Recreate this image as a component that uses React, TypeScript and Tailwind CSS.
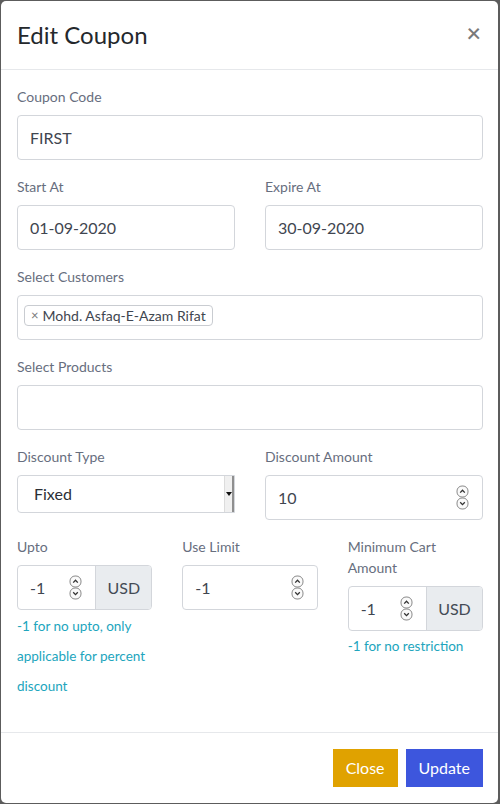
import type { ReactNode } from "react";

const FONT = { fontFamily: "Lato, 'Noto Sans', sans-serif" };

function Spinner() {
  return (
    <svg width="13" height="25" viewBox="0 0 13 25" className="shrink-0">
      <rect x="1" y="1" width="11" height="11" rx="5" fill="#fafafa" stroke="#8a8a8a" strokeWidth="1" />
      <rect x="1" y="13" width="11" height="11" rx="5" fill="#fafafa" stroke="#8a8a8a" strokeWidth="1" />
      <path d="M4.2 7.6 L6.5 5.2 L8.8 7.6" fill="none" stroke="#333" strokeWidth="1.3" />
      <path d="M4.2 17.2 L6.5 19.6 L8.8 17.2" fill="none" stroke="#333" strokeWidth="1.3" />
    </svg>
  );
}

function Label({ children }: { children: ReactNode }) {
  return <label className="block text-[14px] leading-[21px] text-[#676e7e] mb-2">{children}</label>;
}

function TextBox({ value }: { value?: string }) {
  return (
    <div className="h-[45px] border border-[#d3d6db] rounded-[4px] px-3 flex items-center text-[16px] text-[#3f4650]">
      {value}
    </div>
  );
}

function NumberBox({ value }: { value: string }) {
  return (
    <div className="h-[45px] border border-[#d3d6db] rounded-[4px] pl-3 pr-[13px] flex items-center justify-between text-[16px] text-[#3f4650]">
      <span>{value}</span>
      <Spinner />
    </div>
  );
}

function UsdGroup({ value }: { value: string }) {
  return (
    <div className="h-[45px] border border-[#d3d6db] rounded-[4px] flex text-[16px] text-[#3f4650] overflow-hidden">
      <div className="flex-1 flex items-center justify-between pl-3 pr-[13px]">
        <span>{value}</span>
        <Spinner />
      </div>
      <div className="w-[56px] bg-[#e9ecef] border-l border-[#d3d6db] flex items-center justify-center text-[16px] text-[#444b55]">
        USD
      </div>
    </div>
  );
}

function Help({ children }: { children: ReactNode }) {
  return <div className="text-[13.5px] leading-[30px] text-[#21a5bd]">{children}</div>;
}

export default function App() {
  return (
    <div className="bg-[#5c5c5c] min-h-[804px] pt-px pl-px pr-[2px] pb-px" style={FONT}>
      <div className="bg-white rounded-[5px] h-[802px] flex flex-col">
        <div className="flex items-start justify-between px-4 pt-4 pb-4 border-b border-[#e6e8eb]">
          <h1 className="text-[24px] leading-[36px] text-[#24282c]">Edit Coupon</h1>
          <button className="text-[#7a7a7a] text-[25px] leading-[26px] font-semibold mt-[2px] mr-[1px]">×</button>
        </div>

        <div className="pt-4 pb-4 pl-4 pr-[15px] flex-1">
          <div className="mb-4">
            <Label>Coupon Code</Label>
            <TextBox value="FIRST" />
          </div>

          <div className="grid grid-cols-2 gap-x-[30px]">
            <div className="mb-4">
              <Label>Start At</Label>
              <TextBox value="01-09-2020" />
            </div>
            <div className="mb-4">
              <Label>Expire At</Label>
              <TextBox value="30-09-2020" />
            </div>
          </div>

          <div className="mb-4">
            <Label>Select Customers</Label>
            <div className="h-[45px] border border-[#d3d6db] rounded-[4px] px-[6px] pt-[6px]">
              <span className="inline-flex items-center h-[21px] border border-[#c9ccd1] rounded-[4px] px-[6px] text-[14px] text-[#3f4650]">
                <span className="text-[#777] mr-[4px] text-[13px]">×</span>Mohd. Asfaq-E-Azam Rifat
              </span>
            </div>
          </div>

          <div className="mb-4">
            <Label>Select Products</Label>
            <TextBox />
          </div>

          <div className="grid grid-cols-2 gap-x-[30px]">
            <div className="mb-4">
              <Label>Discount Type</Label>
              <div className="h-[38px] border border-[#d3d6db] rounded-l-[4px] flex text-[16px] text-[#2b2f35]">
                <div className="flex-1 flex items-center pl-4">Fixed</div>
                <div className="w-[10px] bg-[#f0f0f0] border-l border-[#dcdcdc] border-r-2 border-r-[#8f8f8f] flex items-center justify-center">
                  <svg width="6" height="4" viewBox="0 0 6 4">
                    <path d="M0 0 L6 0 L3 4 Z" fill="#111" />
                  </svg>
                </div>
              </div>
            </div>
            <div className="mb-4">
              <Label>Discount Amount</Label>
              <NumberBox value="10" />
            </div>
          </div>

          <div className="grid grid-cols-3 gap-x-[30px]">
            <div>
              <Label>Upto</Label>
              <UsdGroup value="-1" />
              <div className="mt-[1px]">
                <Help>-1 for no upto, only applicable for percent discount</Help>
              </div>
            </div>
            <div>
              <Label>Use Limit</Label>
              <NumberBox value="-1" />
            </div>
            <div>
              <Label>Minimum Cart Amount</Label>
              <UsdGroup value="-1" />
              <Help>-1 for no restriction</Help>
            </div>
          </div>
        </div>

        <div className="border-t border-[#e6e8eb] px-[15px] pt-4 pb-4 flex justify-end gap-2">
          <button className="h-[38px] px-[13px] bg-[#e0a200] text-white text-[16px]">Close</button>
          <button className="h-[38px] px-[13px] bg-[#3d56dd] text-white text-[16px]">Update</button>
        </div>
      </div>
    </div>
  );
}
